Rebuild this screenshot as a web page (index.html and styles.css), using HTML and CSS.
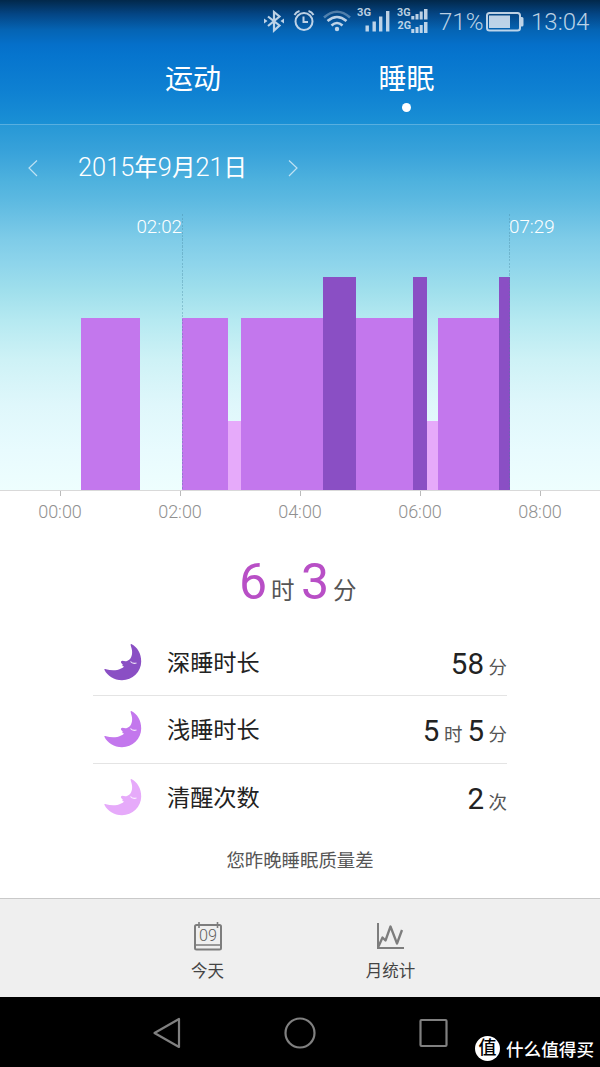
FILE: index.html
```html
<!DOCTYPE html>
<html lang="zh-CN">
<head>
<meta charset="utf-8">
<title>睡眠</title>
<link rel="stylesheet" href="styles.css">
</head>
<body>
<svg class="defs" width="0" height="0">
  <symbol id="moon" viewBox="0 0 38 38"><path d="M27.300 1C33.500 4 37.200 10.500 37.200 18.500C37.200 28.800 28.500 37.200 18 37.200C10 37.200 3.500 33 .5 27C0 26 1 25.900 2 26.300C7 27.800 13 27.700 16.500 25.800C18 25 19.800 24.300 20 23.500L18.300 23L18.700 21.500L17.200 20Q16.300 18 18.500 17.800C20 18.200 21.500 18.700 23 18C27 16.500 28.300 12.500 28.100 8.500C28 5 26.200 2 26.700 1.200Q27 .8 27.300 1Z" fill="currentColor"/><path d="M26.500 18.500q2 2.600 6 1.500" fill="none" stroke="#fff" stroke-opacity=".85" stroke-width="1.100"/></symbol>
</svg>
<div class="phone">
  <section class="hero">
    <div class="status">
      <svg class="ic-bt" width="22" height="24" viewBox="0 0 22 24" fill="none" stroke="currentColor" stroke-width="2.200"><path d="M5 7.500l11.500 9-5.500 5V3l5.500 4.500-11.500 9.500"/><path d="M1 9.500l3.500 2.500L1 14.500zM21 9.500l-3.500 2.500 3.500 2.500z" fill="currentColor" stroke="none"/></svg>
      <svg class="ic-alarm" width="22" height="24" viewBox="0 0 22 24" fill="none" stroke="currentColor" stroke-width="2"><circle cx="11" cy="13.500" r="8.500"/><path d="M10.500 8.500v5.500H15M1.500 7Q3 4 6.500 3M20.500 7Q19 4 15.500 3"/></svg>
      <svg class="ic-wifi" width="28" height="24" viewBox="0 0 28 24" fill="none" stroke="currentColor" stroke-width="2.600"><path d="M1 9.500Q14-2 27 9.500" opacity=".42"/><path d="M4.500 13Q14 5 23.500 13M8.500 17.500Q14 12.500 19.500 17.500"/><circle cx="14" cy="21" r="2.200" fill="currentColor" stroke="none"/></svg>
      <svg class="ic-sig" width="34" height="28" viewBox="0 0 34 28" fill="currentColor"><text x="0" y="12" class="net" textLength="14" lengthAdjust="spacingAndGlyphs">3G</text><path d="M8.500 21.500h3.400v6h-3.400zM15.500 17.500h3.400v10h-3.400zM22 12.500h3.400v15h-3.400zM29 7h3.400v20.500h-3.400z"/></svg>
      <svg class="ic-sig2" width="32" height="28" viewBox="0 0 32 28" fill="currentColor"><text x="0" y="11" class="net" textLength="13.500" lengthAdjust="spacingAndGlyphs">3G</text><text x=".5" y="24" class="net" textLength="13.500" lengthAdjust="spacingAndGlyphs">2G</text><path d="M14.300 11h3v3.500h-3zM18.500 9h3v5.500h-3zM22.700 6.500h3v8h-3zM27 4h3.500v10.500h-3.500zM14.300 24h3v4h-3zM18.500 22h3v6h-3zM22.700 20h3v8h-3zM27 17h3.500v11h-3.500z"/></svg>
      <span class="pct">71%</span>
      <svg class="ic-bat" width="38" height="20" viewBox="0 0 38 20"><rect x="1" y="1" width="33" height="17.500" rx="2.500" fill="none" stroke="currentColor" stroke-width="2"/><path d="M3 3.500h21V16H3zM35 5h1q1.500 0 1.500 1.500v6.500q0 1.500-1.500 1.500h-1z" fill="currentColor"/></svg>
      <span class="clock">13:04</span>
    </div>
    <nav class="tabs">
      <div class="tab">运动</div>
      <div class="tab active">睡眠</div>
    </nav>
    <div class="datebar">
      <svg width="12" height="18" viewBox="0 0 12 18"><path d="M10 1.500L2 9l8 8" fill="none" stroke="#fff" stroke-opacity=".65" stroke-width="1.200"/></svg>
      <div class="date">2015<i>年</i>9<i>月</i>21<i>日</i></div>
      <svg width="12" height="18" viewBox="0 0 12 18"><path d="M2 1.500L10 9l-8 8" fill="none" stroke="#fff" stroke-opacity=".65" stroke-width="1.200"/></svg>
    </div>
    <div class="chart">
      <div class="bar none" style="width:81.200px"></div>
      <div class="bar light" style="width:58.800px"></div>
      <div class="bar none" style="width:42px"></div>
      <div class="bar light" style="width:46.300px"></div>
      <div class="bar awake" style="width:12.300px"></div>
      <div class="bar light" style="width:82px"></div>
      <div class="bar deep" style="width:33px"></div>
      <div class="bar light" style="width:57.200px"></div>
      <div class="bar deep" style="width:14px"></div>
      <div class="bar awake" style="width:11.100px"></div>
      <div class="bar light" style="width:61.100px"></div>
      <div class="bar deep" style="width:11px"></div>
      <div class="mark start"><span>02:02</span></div>
      <div class="mark end"><span>07:29</span></div>
    </div>
  </section>
  <div class="axis"><span>00:00</span><span>02:00</span><span>04:00</span><span>06:00</span><span>08:00</span></div>

  <section class="summary">
    <div class="total"><b>6</b><i>时</i><b>3</b><i>分</i></div>
    <div class="rows">
      <div class="row c-deep">
        <svg class="moon" width="38" height="38"><use href="#moon"/></svg>
        <span class="name">深睡时长</span><span class="val"><b>58</b><i>分</i></span>
      </div>
      <div class="row c-light">
        <svg class="moon" width="38" height="38"><use href="#moon"/></svg>
        <span class="name">浅睡时长</span><span class="val"><b>5</b><i>时</i><b>5</b><i>分</i></span>
      </div>
      <div class="row c-awake">
        <svg class="moon" width="38" height="38"><use href="#moon"/></svg>
        <span class="name">清醒次数</span><span class="val"><b>2</b><i>次</i></span>
      </div>
    </div>
    <p class="note">您昨晚睡眠质量差</p>
  </section>

  <footer class="toolbar">
    <div class="tool">
      <svg width="30" height="30" viewBox="0 0 30 30" fill="none" stroke="#7d7d7d" stroke-width="2"><rect x="2" y="4" width="26" height="24.500" rx="1.500"/><path d="M2 24h26M6 1v6M24.500 1v6" stroke-width="1.600"/><text x="15" y="19.500" text-anchor="middle" class="day" textLength="18" lengthAdjust="spacingAndGlyphs">09</text></svg>
      <span>今天</span>
    </div>
    <div class="tool">
      <svg width="30" height="30" viewBox="0 0 30 30" fill="none" stroke="#7d7d7d" stroke-width="2"><path d="M2 2v25h26"/><path d="M2.500 25.500L6.500 16.500l3 3L14.500 5.500 21 22.500 26 9" stroke-width="2.300" stroke-linejoin="round"/></svg>
      <span>月统计</span>
    </div>
  </footer>

  <div class="navbar">
    <svg width="32" height="32" viewBox="0 0 32 32" fill="none" stroke="#808080" stroke-width="2.200" stroke-linejoin="round"><path d="M3.500 16L28 2v28z"/></svg>
    <svg width="32" height="32" viewBox="0 0 32 32" fill="none" stroke="#808080" stroke-width="2.200"><circle cx="16" cy="16" r="14.500"/></svg>
    <svg width="32" height="32" viewBox="0 0 32 32" fill="none" stroke="#808080" stroke-width="2.200"><rect x="3.500" y="3" width="26" height="26" rx="1"/></svg>
    <div class="brand"><span class="logo">值</span><span>什么值得买</span></div>
  </div>
</div>
</body>
</html>
```
FILE: styles.css
```css
* { box-sizing: border-box; }
body { margin: 0; background: #fff; font-family: Roboto, "Noto Sans CJK SC", sans-serif; }
i, b { font-style: normal; font-weight: 400; }
svg { display: block; flex: none; }
.phone { width: 600px; height: 1067px; display: flex; flex-direction: column; overflow: hidden; }

.hero {
  height: 490px; flex: none; display: flex; flex-direction: column; color: #fff;
  background: linear-gradient(180deg, #02284a 0, #044584 14px, #0564b4 30px, #0570ca 45px, #0675ce 56px, #0f81d2 92px, #1a90d5 124px, #2798d6 125px, #38a2da 152px, #4fb2de 182px, #5cb9e1 200px, #7fcce8 240px, #8dd4eb 262px, #9fdfec 290px, #b5e9f1 320px, #cef2f6 360px, #dff7fb 405px, #e8fbfe 450px, #eefefe 490px);
}
.status { height: 44px; display: flex; align-items: flex-start; padding-left: 263px; color: rgba(222, 233, 245, .85); }
.ic-bt { margin-top: 9px; }
.ic-alarm { margin: 8px 0 0 8px; }
.ic-wifi { margin: 8px 0 0 8px; }
.ic-sig { margin: 4px 0 0 6px; }
.ic-sig2 { margin: 5px 0 0 6px; }
.net { font-family: Roboto, sans-serif; font-size: 11.500px; font-weight: 700; }
.pct, .clock { font-size: 24px; line-height: 28px; margin-top: 8px; font-weight: 300; white-space: nowrap; }
.pct { width: 44px; margin-left: 10px; }
.ic-bat { margin: 12px 0 0 3px; }
.clock { margin-left: 7px; }

.tabs { height: 81px; display: flex; padding-left: 86px; border-bottom: 1px solid rgba(255, 255, 255, .25); }
.tab { width: 214px; text-align: center; font-size: 28px; line-height: 40px; padding-top: 16px; }
.tab.active { width: 213px; }
.tab.active::after { content: ""; display: block; width: 9px; height: 9px; border-radius: 50%; background: #fff; margin: 3px auto 0; }

.datebar { height: 85px; display: flex; align-items: center; padding-left: 27px; }
.date { width: 169px; margin: 0 40px 0 39px; font-size: 25.400px; line-height: 36px; font-weight: 300; white-space: nowrap; }
.date i { font-size: 23.500px; font-weight: 400; }

.chart { position: relative; height: 280px; display: flex; align-items: flex-end; }
.bar { flex: none; height: 172px; }
.bar.none { height: 0; }
.light { background: #c377ed; }
.deep { height: 213px; background: #8a4fc4; }
.awake { height: 69px; background: #e6aafa; }
.mark { position: absolute; top: 4px; bottom: 0; width: 1px; background: repeating-linear-gradient(180deg, rgba(65, 130, 155, .35) 0 2px, transparent 2px 3.500px); }
.mark.start { left: 182px; }
.mark.end { left: 509px; }
.mark span { position: absolute; top: 1px; font-size: 18.800px; line-height: 24px; font-weight: 300; }
.mark.start span { right: 1px; }
.mark.end span { left: 0; }

.axis { height: 45px; flex: none; display: flex; border-top: 1px solid #d9d9d9; }
.axis span { width: 120px; text-align: center; color: #909090; font-size: 18px; line-height: 24px; font-weight: 300; }
.axis span::before { content: ""; display: block; width: 1px; height: 5px; margin: 0 auto 4px; background: #bbb; }

.summary { height: 363px; flex: none; }
.total { display: flex; align-items: baseline; height: 94px; padding: 17px 0 0 239px; line-height: 60px; }
.total b { width: 28px; font-size: 50px; color: #b84fc6; }
.total i { width: 24px; margin: 0 5px 0 4px; font-size: 23.500px; color: #555; }
.total i + b { margin-left: 1px; }
.rows { width: 414px; margin: 0 auto; }
.row { height: 67.300px; display: flex; align-items: center; border-bottom: 1px solid #e4e4e4; padding: 2px 0 0 11px; }
.row:last-child { border-color: transparent; }
.c-deep { color: #8a4fc4; }
.c-light { color: #c377ed; }
.c-awake { color: #e6aafa; }
.moon { margin-top: -2px; }
.name { margin-left: 25px; font-size: 23.200px; line-height: 34px; color: #222; }
.val { margin: 2px 0 0 auto; display: flex; align-items: baseline; color: #222; }
.val b { font-size: 29.500px; line-height: 36px; }
.val i { width: 18.500px; margin-left: 4.500px; font-size: 18.500px; color: #555; }
.val i + b { margin-left: 5px; }
.note { margin: 16px 0 0; text-align: center; font-size: 18.400px; line-height: 27px; color: #555; }

.toolbar { height: 99px; flex: none; display: flex; padding-left: 116px; background: #efefef; border-top: 1px solid #c9c9c9; }
.tool { width: 183px; display: flex; flex-direction: column; align-items: center; padding-top: 22px; font-size: 16.500px; line-height: 24px; color: #444; }
.tool span { margin-top: 9px; }
.day { font: 300 17px Roboto, sans-serif; fill: #606060; stroke: none; }

.navbar { flex: 1; background: #000; display: flex; padding: 20px 0 0 151px; gap: 101px; }
.brand { display: flex; align-items: center; gap: 6px; height: 26px; margin: 18px 0 0 -75px; color: #fff; font-size: 17.600px; font-weight: 500; white-space: nowrap; }
.logo { width: 25px; height: 25px; border-radius: 50%; background: #fff; color: #000; font-size: 18px; line-height: 24px; text-align: center; }
```
